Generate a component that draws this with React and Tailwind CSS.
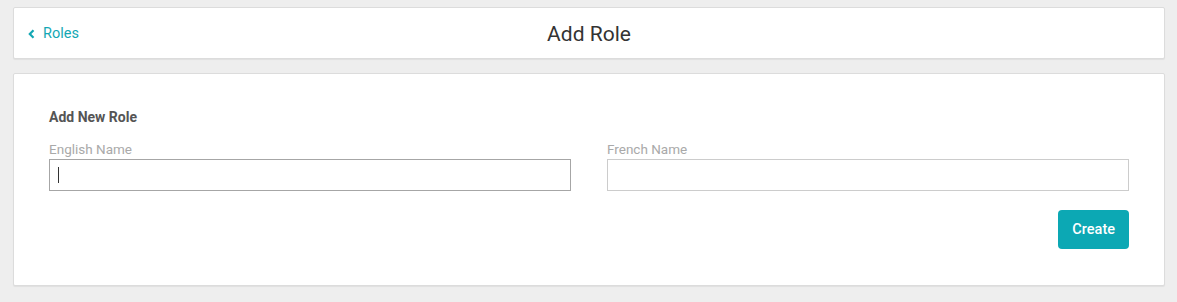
export default function App() {
  return (
    <div className="min-h-[302px] bg-[#eeeeee] pl-[13px] pr-[12px] pt-[7px] font-['Roboto',sans-serif]">
      {/* Header */}
      <div className="relative flex h-[52px] items-center rounded-[2px] border border-[#dcdcdc] bg-white pt-[2px] shadow-[0_1px_1px_rgba(0,0,0,0.06)]">
        <a className="flex items-center gap-[8px] pl-[14px] text-[14.5px] text-[#13a7b4]">
          <svg width="7" height="10" viewBox="0 0 7 10" fill="none">
            <path d="M5.5 1.2 L1.8 5 L5.5 8.8" stroke="currentColor" strokeWidth="2.2" />
          </svg>
          <span>Roles</span>
        </a>
        <h1 className="absolute left-1/2 top-[11px] -translate-x-1/2 text-[21px] font-normal text-[#333333]">Add Role</h1>
      </div>

      {/* Form card */}
      <div className="mt-[14px] rounded-[2px] border border-[#dcdcdc] bg-white px-[35px] pb-[36px] pt-[35px] shadow-[0_1px_1px_rgba(0,0,0,0.06)]">
        <h2 className="text-[14px] font-bold leading-[16px] text-[#555555]">Add New Role</h2>
        <div className="mt-[16px] grid grid-cols-2 gap-[36px]">
          <div>
            <label className="block text-[13.5px] leading-[16px] text-[#a9a9a9]">English Name</label>
            <div className="mt-[2px] flex h-[32px] items-center border border-[#a6a6a6] px-[8px]">
              <span className="h-[16px] w-px bg-[#333]" />
            </div>
          </div>
          <div>
            <label className="block text-[13.5px] leading-[16px] text-[#a9a9a9]">French Name</label>
            <input className="mt-[2px] block h-[32px] w-full border border-[#cccccc] px-[8px] outline-none" />
          </div>
        </div>
        <div className="mt-[19px] flex justify-end">
          <button className="h-[39px] rounded-[4px] bg-[#0ca8b4] px-[14px] text-[14.5px] font-medium text-white">Create</button>
        </div>
      </div>
    </div>
  );
}
